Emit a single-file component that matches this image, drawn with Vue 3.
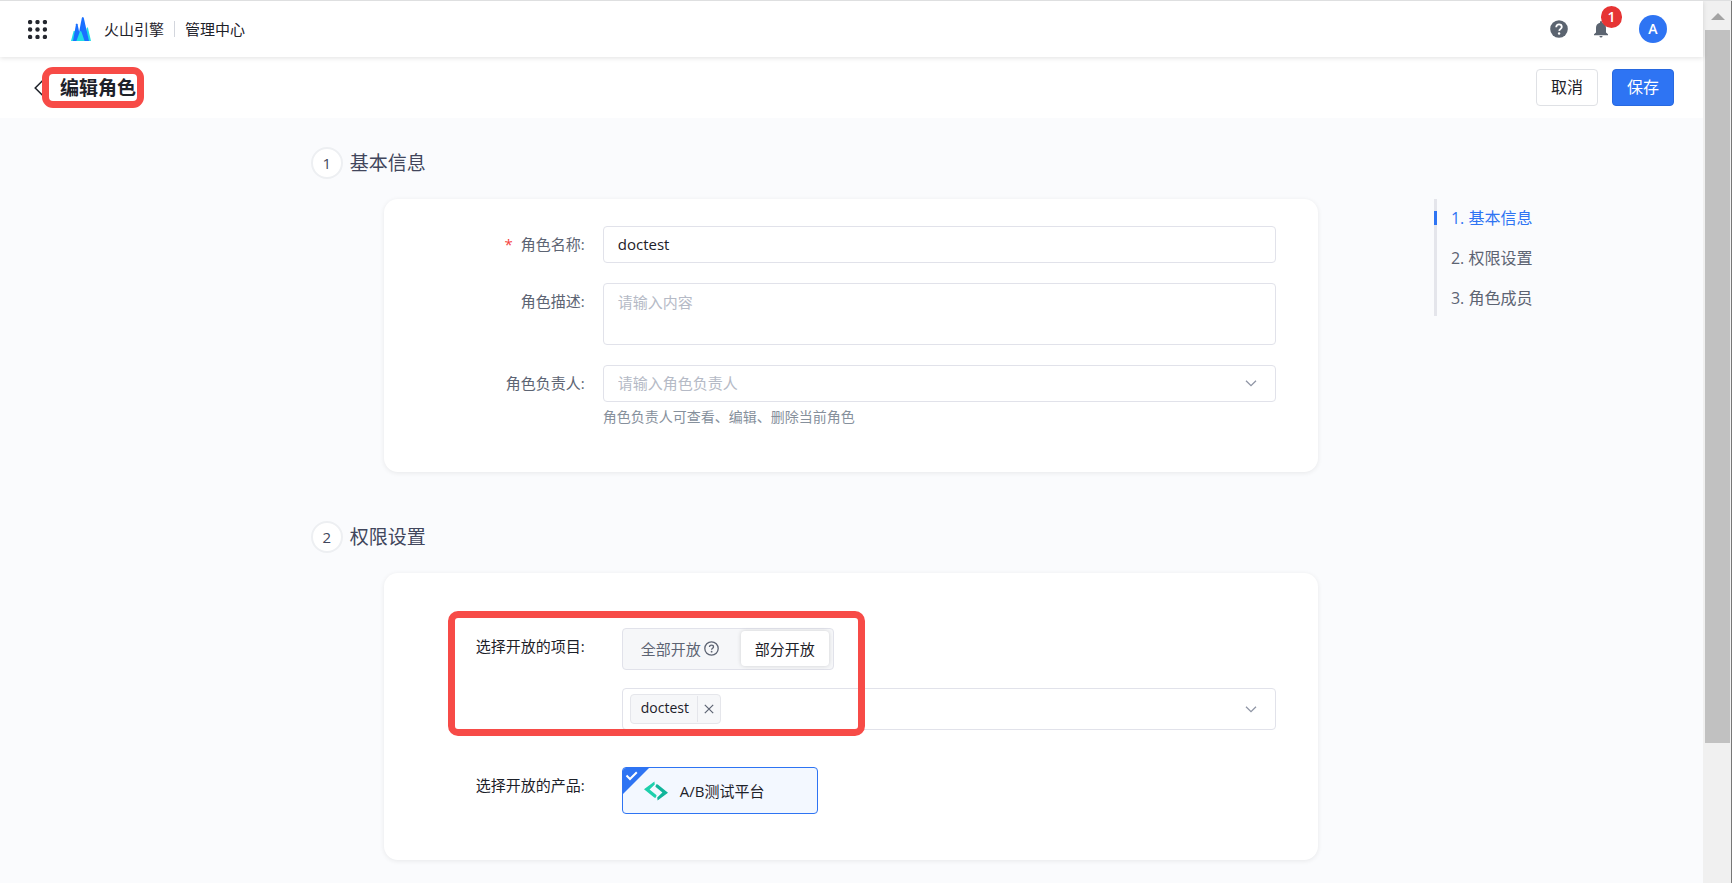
<script setup>
import { ref } from 'vue'

const name = ref('doctest')
const description = ref('')
const owner = ref('')
const scope = ref('part')
const projects = ref(['doctest'])
const productOn = ref(true)
const active = ref(0)
const anchors = [
  { id: 'basic', text: '1. 基本信息' },
  { id: 'permission', text: '2. 权限设置' },
  { id: 'members', text: '3. 角色成员' },
]
const dots = [2, 9, 16].flatMap((y) => [2, 9, 16].map((x) => ({ x, y })))
</script>

<template>
  <div class="window">
    <div class="page">
      <header class="topbar">
        <button class="icon-btn" type="button" aria-label="应用">
          <svg width="19" height="19" viewBox="0 0 18 18">
            <circle v-for="d in dots" :key="d.x + '-' + d.y" :cx="d.x" :cy="d.y" r="2.1" fill="#24272e" />
          </svg>
        </button>
        <a class="brand" href="#">
          <svg width="20" height="24" viewBox="0 0 20 24" aria-hidden="true">
            <path d="M0 24 2.5 14.5Q3.2 13 4 14.5L7 24Z" fill="#20dfe6" />
            <path d="M13 24 15.8 11Q16.4 9.5 17 11L20 24Z" fill="#20dfe6" />
            <path d="M2 24 5 7.3Q5.8 5.6 6.6 7.3L10 24Z" fill="#1a70ff" />
            <path d="M6.4 24 10.8 1Q11.8 -0.8 12.8 1L18 24Z" fill="#1a70ff" />
            <path d="M5.4 24 8.8 14.8Q9.6 13.4 10.4 14.8L13.6 24Z" fill="#22dde4" />
          </svg>
          <span>火山引擎</span>
        </a>
        <span class="divider"></span>
        <span class="center-name">管理中心</span>
        <div class="tools">
          <button class="icon-btn" type="button" aria-label="帮助">
            <svg width="18" height="18" viewBox="0 0 18 18">
              <circle cx="9" cy="9" r="8.8" fill="#5b6470" />
              <path d="M6.2 7.2C6.2 5.5 7.4 4.4 9 4.4s2.8 1 2.8 2.5c0 1.8-2.4 2-2.6 4" fill="none" stroke="#fff" stroke-width="1.8" />
              <circle cx="9.1" cy="13.5" r="1.2" fill="#fff" />
            </svg>
          </button>
          <button class="icon-btn bell" type="button" aria-label="消息">
            <svg width="14" height="17" viewBox="0 0 14 17">
              <path d="M6 1.8V1a1 1 0 0 1 2 0v.8C10.6 2.3 12 4.3 12 7v4.5l2 1.7v1H0v-1l2-1.7V7C2 4.3 3.4 2.3 6 1.8ZM5.4 15h3.2Q8.4 16.6 7 16.6T5.4 15Z" fill="#5b6470" />
            </svg>
            <span class="badge">1</span>
          </button>
          <button class="avatar" type="button">A</button>
        </div>
      </header>

      <div class="titlebar">
        <button class="icon-btn back" type="button" aria-label="返回">
          <svg width="9" height="16" viewBox="0 0 9 16">
            <path d="M8.5 .7 1.2 8l7.3 7.3" fill="none" stroke="#1d2129" stroke-width="1.5" />
          </svg>
        </button>
        <h1>编辑角色</h1>
        <div class="actions">
          <button class="btn" type="button">取消</button>
          <button class="btn primary" type="button">保存</button>
        </div>
      </div>

      <main class="content">
        <div class="sections">
          <section id="basic">
            <h2><span class="step">1</span>基本信息</h2>
            <form class="card basic" @submit.prevent>
              <div class="row">
                <label class="lab" for="f-name"><span class="req">*</span>角色名称:</label>
                <input id="f-name" v-model="name" class="field" type="text" />
              </div>
              <div class="row">
                <label class="lab" for="f-desc">角色描述:</label>
                <textarea id="f-desc" v-model="description" class="field area" placeholder="请输入内容"></textarea>
              </div>
              <div class="row">
                <label class="lab" for="f-owner">角色负责人:</label>
                <div>
                  <div class="select">
                    <select id="f-owner" v-model="owner" class="field placeholder">
                      <option value="">请输入角色负责人</option>
                    </select>
                    <svg class="chev" width="12" height="7" viewBox="0 0 12 7"><path d="M1 .8 6 5.6 11 .8" /></svg>
                  </div>
                  <p class="help">角色负责人可查看、编辑、删除当前角色</p>
                </div>
              </div>
            </form>
          </section>

          <section id="permission">
            <h2><span class="step">2</span>权限设置</h2>
            <form class="card permission" @submit.prevent>
              <div class="row">
                <label class="lab dark" for="f-projects">选择开放的项目:</label>
                <div class="stack">
                  <div class="segment" role="radiogroup">
                    <label :class="{ on: scope === 'all' }">
                      <input v-model="scope" class="hidden-input" type="radio" name="scope" value="all" />全部开放
                      <svg width="15" height="15" viewBox="0 0 15 15">
                        <circle cx="7.5" cy="7.5" r="6.7" fill="none" stroke="#5d6473" stroke-width="1.3" />
                        <path d="M5.5 6.1c0-1.2.9-1.9 2-1.9s2 .7 2 1.7c0 1.3-1.9 1.4-1.9 2.9" fill="none" stroke="#5d6473" stroke-width="1.3" />
                        <circle cx="7.6" cy="10.7" r=".9" fill="#5d6473" />
                      </svg>
                    </label>
                    <label :class="{ on: scope === 'part' }">
                      <input v-model="scope" class="hidden-input" type="radio" name="scope" value="part" />部分开放
                    </label>
                  </div>
                  <div class="field multi">
                    <span v-for="p in projects" :key="p" class="tag">
                      <span class="tag-text">{{ p }}</span>
                      <button type="button" :aria-label="'移除 ' + p" @click="projects = projects.filter((x) => x !== p)">
                        <svg width="10" height="10" viewBox="0 0 10 10"><path d="M.8.8 9.2 9.2M9.2.8.8 9.2" stroke="#5d6473" stroke-width="1.2" /></svg>
                      </button>
                    </span>
                    <input id="f-projects" class="search" type="text" role="combobox" aria-expanded="false" />
                    <svg class="chev" width="12" height="7" viewBox="0 0 12 7"><path d="M1 .8 6 5.6 11 .8" /></svg>
                  </div>
                </div>
              </div>
              <div class="row">
                <label class="lab dark" for="f-product">选择开放的产品:</label>
                <label class="product">
                  <input id="f-product" v-model="productOn" class="hidden-input" type="checkbox" />
                  <svg v-if="productOn" class="corner" width="26" height="26" viewBox="0 0 26 26">
                    <path d="M0 0H26L0 26Z" fill="#2e74f3" />
                    <path d="M3.5 7.5 7 11 13.8 4.2" fill="none" stroke="#fff" stroke-width="2" />
                  </svg>
                  <svg width="24" height="20" viewBox="0 0 24 20">
                    <path d="M10.4 .4 0 8.2 10.2 16.4Q11.4 17.2 12 16.2L12.6 14.2 5.6 8.4 10.8 3.6Z" fill="#1ed0ac" />
                    <path d="M13.6 19.6 24 11.8 13.8 3.6Q12.6 2.8 12 3.8L11.4 5.8 18.4 11.6 13.2 16.4Z" fill="#11b59a" />
                  </svg>
                  <span>A/B测试平台</span>
                </label>
              </div>
              <div class="mark"></div>
            </form>
          </section>
        </div>

        <nav class="anchors">
          <ul>
            <li v-for="(a, i) in anchors" :key="a.id" :class="{ active: i === active }">
              <a :href="'#' + a.id" @click="active = i">{{ a.text }}</a>
            </li>
          </ul>
        </nav>
      </main>
    </div>

    <div class="scrollbar" aria-hidden="true">
      <svg width="14" height="7" viewBox="0 0 14 7"><path d="M0 7 7 0l7 7Z" fill="#a3a3a3" /></svg>
      <div class="thumb"></div>
    </div>
  </div>
</template>

<style>
body {
  margin: 0;
}
</style>

<style scoped>
* {
  box-sizing: border-box;
}
.window {
  display: flex;
  height: 100vh;
  overflow: hidden;
  border-top: 1px solid #dedfe0;
  background: #fafbfd;
  color: #1d2129;
  font: 15px/22px "Open Sans", "Noto Sans CJK SC", sans-serif;
}
button,
input,
select,
textarea {
  font: inherit;
  color: inherit;
  margin: 0;
}
svg {
  display: block;
  flex: none;
}
.page {
  flex: 1;
  min-width: 0;
}
.icon-btn {
  padding: 0;
  border: 0;
  background: none;
}
.topbar {
  position: relative;
  display: flex;
  align-items: center;
  height: 56px;
  padding: 0 36px 0 28px;
  background: #fff;
  box-shadow: 0 1px 5px rgba(0, 0, 0, 0.12);
}
.brand {
  display: flex;
  align-items: center;
  gap: 13px;
  margin-left: 24px;
  color: #1d2129;
  text-decoration: none;
}
.divider {
  width: 1px;
  height: 16px;
  margin: 0 10px;
  background: #d3d6dd;
}
.tools {
  display: flex;
  align-items: center;
  margin-left: auto;
}
.bell {
  position: relative;
  margin: 0 31px 0 26px;
}
.badge {
  position: absolute;
  left: 7px;
  top: -15px;
  width: 21px;
  height: 22px;
  border-radius: 11px;
  background: #e63434;
  color: #fff;
  font-size: 14px;
  font-weight: 600;
}
.avatar {
  width: 28px;
  height: 28px;
  padding: 0;
  border: 0;
  border-radius: 50%;
  background: #2e74f3;
  color: #fff;
  font-size: 14px;
  font-weight: 600;
}
.titlebar {
  display: flex;
  align-items: center;
  height: 61px;
  padding: 0 29px 0 34px;
  background: #fff;
}
h1 {
  position: relative;
  margin: 0 0 0 17px;
  font-size: 19px;
  line-height: 26px;
  font-weight: 700;
}
h1::after {
  content: "";
  position: absolute;
  inset: -8px -8px -7px -18px;
  border: 7px solid #f74b47;
  border-radius: 11px;
}
.actions {
  display: flex;
  gap: 14px;
  margin-left: auto;
}
.btn {
  height: 37px;
  padding: 0 14px 2px;
  border: 1px solid #dfe1e5;
  border-radius: 4px;
  background: #fff;
  font-size: 16px;
  line-height: 22px;
}
.btn.primary {
  border-color: #2869e0;
  background: #2e74f3;
  color: #fff;
}
.content {
  display: grid;
  grid-template-columns: minmax(0, 1007fr) minmax(0, 385fr);
  padding: 29px 0 22px 18.25%;
}
h2 {
  display: flex;
  align-items: center;
  gap: 7px;
  margin: 0 0 20px;
  color: #41465c;
  font-size: 19px;
  line-height: 32px;
  font-weight: 400;
}
.step {
  width: 32px;
  height: 32px;
  border: 2px solid #edeff2;
  border-radius: 50%;
  background: #fff;
  font-size: 15px;
  line-height: 28px;
  text-align: center;
}
.card {
  position: relative;
  display: grid;
  margin: 0 0 49px 73px;
  border-radius: 14px;
  background: #fff;
  box-shadow: 0 1px 5px rgba(0, 0, 0, 0.08);
}
.basic {
  gap: 20px;
  padding: 27px 42px 44px 0;
}
.permission {
  gap: 37px;
  margin-bottom: 0;
  padding: 55px 42px 46px 0;
}
.row {
  display: grid;
  grid-template-columns: 201px minmax(0, 1fr);
  column-gap: 18px;
}
.permission .row {
  column-gap: 37px;
}
.lab {
  padding-top: 7px;
  color: #5d6473;
  text-align: right;
}
.lab.dark {
  color: #1d2129;
}
.req {
  margin-right: 8px;
  color: #f53f3f;
}
.field {
  display: block;
  width: 100%;
  height: 37px;
  padding: 0 14px 2px;
  border: 1px solid #e1e2ea;
  border-radius: 4px;
  background: #fff;
  outline: 0;
}
.area {
  height: 62px;
  padding: 7px 14px;
  resize: none;
}
.area::placeholder,
.placeholder {
  color: #b5bac6;
  opacity: 1;
}
.select {
  position: relative;
}
select {
  appearance: none;
}
.chev {
  fill: none;
  stroke: #8f95a5;
  stroke-width: 1.3;
}
.select .chev {
  position: absolute;
  right: 19px;
  top: 15px;
}
.help {
  margin: 4px 0 0;
  color: #86909c;
  font-size: 14px;
}
.stack {
  display: grid;
  gap: 18px;
}
.segment {
  display: flex;
  justify-self: start;
  height: 42px;
  padding: 2px 4px 3px;
  border: 1px solid #e1e2ea;
  border-radius: 4px;
  background: #f6f7f9;
}
.segment label {
  display: flex;
  align-items: center;
  gap: 3px;
  padding: 0 14px;
  border-radius: 4px;
  color: #5d6473;
}
.segment label:first-of-type {
  padding-right: 22px;
}
.segment .on {
  background: #fff;
  color: #1d2129;
  box-shadow: 0 0 4px rgba(0, 0, 0, 0.16);
}
.hidden-input {
  position: absolute;
  opacity: 0;
  pointer-events: none;
}
.multi {
  display: flex;
  align-items: center;
  height: 42px;
  padding: 0 18px 0 7px;
}
.tag {
  display: flex;
  align-items: center;
  height: 30px;
  border: 1px solid #e5e6eb;
  border-radius: 4px;
  background: #f6f7f9;
  font-size: 14px;
}
.tag-text {
  padding: 0 8px 2px 10px;
}
.tag button {
  height: 26px;
  padding: 0 6px;
  border: 0;
  border-left: 1px solid #e5e6eb;
  background: none;
}
.search {
  flex: 1;
  min-width: 0;
  border: 0;
  outline: 0;
  background: none;
}
.product {
  position: relative;
  display: flex;
  align-items: center;
  justify-self: start;
  gap: 12px;
  min-width: 196px;
  height: 47px;
  padding: 0 21px;
  border: 1px solid #2e74f3;
  border-radius: 4px;
  background: #f3f8ff;
  overflow: hidden;
}
.corner {
  position: absolute;
  left: 0;
  top: 0;
}
.mark {
  position: absolute;
  left: 64px;
  top: 38px;
  width: 417px;
  height: 125px;
  border: 7px solid #f74b47;
  border-radius: 10px;
  pointer-events: none;
}
.anchors {
  padding: 52px 0 0 116px;
}
.anchors ul {
  display: grid;
  gap: 26px;
  margin: 0;
  padding: 12px 0 11px;
  border-left: 3px solid #e4e5eb;
  list-style: none;
}
.anchors li {
  margin-left: -3px;
  padding-left: 14px;
  border-left: 3px solid transparent;
  font-size: 16px;
  line-height: 14px;
}
.anchors .active {
  border-color: #2e74f3;
}
.anchors a {
  color: #5d6473;
  text-decoration: none;
}
.anchors .active a {
  color: #2e74f3;
}
.scrollbar {
  display: flex;
  flex-direction: column;
  align-items: center;
  gap: 10px;
  width: 29px;
  padding: 12px 1px 0 2px;
  border-right: 1px solid #777;
  background: #f0f0f0;
}
.thumb {
  width: 100%;
  height: 82%;
  background: #c1c1c1;
}
</style>
